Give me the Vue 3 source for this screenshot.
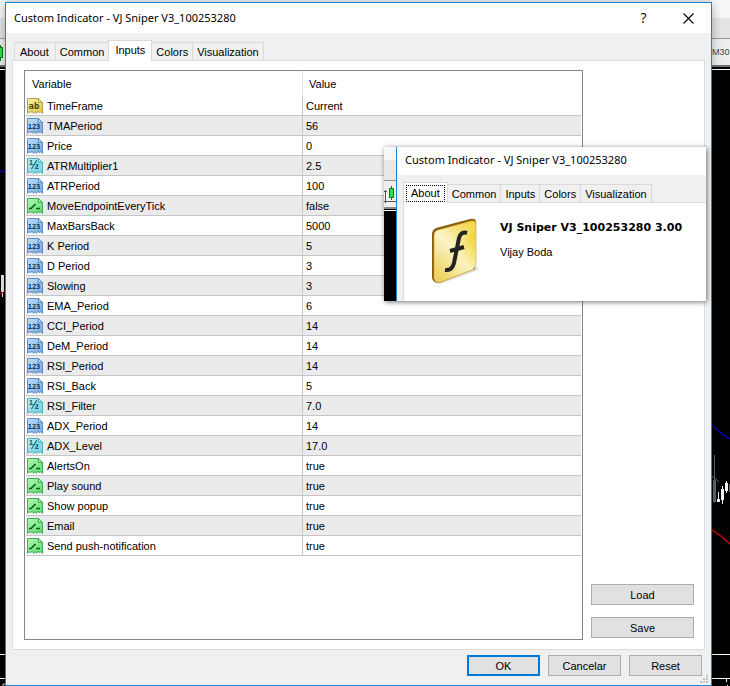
<script setup>
import { ref } from 'vue'

const title = 'Custom Indicator - VJ Sniper V3_100253280'
const tabs = ['About', 'Common', 'Inputs', 'Colors', 'Visualization']
const activeTab = ref('Inputs')
const popupTab = ref('About')

const kinds = {
  text: { light: '#fbf3a6', dark: '#d6c34c', edge: '#b09c3c', ink: '#4d4408', label: 'ab', size: 9 },
  int: { light: '#bfe0fc', dark: '#6ea9e2', edge: '#5288c0', ink: '#0d2f5e', label: '123', size: 7 },
  real: { light: '#b8f0f6', dark: '#70d0e0', edge: '#4aa8ba', ink: '#0f5f74', label: '½', size: 12 },
  bool: { light: '#b4f8b8', dark: '#58d96a', edge: '#38a54c', ink: '#0b5a1c', label: '', size: 7 },
}

const rows = [
  ['text', 'TimeFrame', 'Current'],
  ['int', 'TMAPeriod', '56'],
  ['int', 'Price', '0'],
  ['real', 'ATRMultiplier1', '2.5'],
  ['int', 'ATRPeriod', '100'],
  ['bool', 'MoveEndpointEveryTick', 'false'],
  ['int', 'MaxBarsBack', '5000'],
  ['int', 'K Period', '5'],
  ['int', 'D Period', '3'],
  ['int', 'Slowing', '3'],
  ['int', 'EMA_Period', '6'],
  ['int', 'CCI_Period', '14'],
  ['int', 'DeM_Period', '14'],
  ['int', 'RSI_Period', '14'],
  ['int', 'RSI_Back', '5'],
  ['real', 'RSI_Filter', '7.0'],
  ['int', 'ADX_Period', '14'],
  ['real', 'ADX_Level', '17.0'],
  ['bool', 'AlertsOn', 'true'],
  ['bool', 'Play sound', 'true'],
  ['bool', 'Show popup', 'true'],
  ['bool', 'Email', 'true'],
  ['bool', 'Send push-notification', 'true'],
]
</script>

<template>
  <div class="desktop">
    <svg width="0" height="0" class="defs" aria-hidden="true">
      <defs>
        <linearGradient v-for="(k, name) in kinds" :id="'g-' + name" :key="name" x1="0" y1="0" x2="1" y2="1">
          <stop offset="0" :stop-color="k.light" />
          <stop offset="1" :stop-color="k.dark" />
        </linearGradient>
        <linearGradient id="gold" x1="1" y1="0" x2="0.2" y2="1">
          <stop offset="0" stop-color="#f0cf22" />
          <stop offset="0.25" stop-color="#f2da50" />
          <stop offset="0.55" stop-color="#fbf2c0" />
          <stop offset="1" stop-color="#ecd25e" />
        </linearGradient>
      </defs>
    </svg>

    <div class="chart">
      <div class="chart-caption"></div>
      <div class="chart-menu"></div>
      <div class="chart-tools">
        <svg width="5" height="28" viewBox="0 0 5 28">
          <path d="M0 7h1v2h2v11h-2v3h-1z" fill="#0b7a1c" />
          <path d="M0 10h2v9h-2z" fill="#2fe04a" />
        </svg>
      </div>
      <svg class="plot" width="5" height="617" viewBox="0 0 5 617">
        <path d="M0 0.5H5M0 585.5H5M0 609.5H5" stroke="#fff" />
        <path d="M0 102.5h3l2-1" stroke="#0000e0" fill="none" />
        <path d="M1 206h3v17h-3z" fill="#eee" />
        <path d="M2.5 223v5" stroke="#eee" />
        <path d="M0 224.5l5-2" stroke="#e00000" />
        <path d="M3 617v-2h2" stroke="#ddd" fill="none" />
      </svg>
    </div>

    <main class="dialog">
      <header class="titlebar">
        <h1>{{ title }}</h1>
        <button class="caption-btn" aria-label="Help">?</button>
        <button class="caption-btn" aria-label="Close">
          <svg width="11" height="11" viewBox="0 0 11 11">
            <path d="M0.5 0.5L10.5 10.5M10.5 0.5L0.5 10.5" stroke="#000" stroke-width="1.1" />
          </svg>
        </button>
      </header>

      <div class="tabs" role="tablist">
        <button
          v-for="t in tabs"
          :key="t"
          role="tab"
          class="tab"
          :class="{ active: t === activeTab }"
          @click="activeTab = t"
        >{{ t }}</button>
      </div>

      <section class="panel">
        <div class="list">
          <table>
            <thead>
              <tr>
                <th class="name-col">Variable</th>
                <th class="value-col">Value</th>
              </tr>
            </thead>
            <tbody>
              <tr v-for="[kind, name, value] in rows" :key="name">
                <td>
                  <div class="name">
                    <svg width="16" height="16" viewBox="0 0 16 16">
                      <path
                        d="M0.5 0.5H11.5L15.5 4.5V15.5L14 13.5L12.5 15L11 13L9.5 15.5L8 13.5L6.5 15.5L5 13L3.5 15L2 13.5L0.5 15.5Z"
                        :fill="`url(#g-${kind})`"
                        :stroke="kinds[kind].edge"
                        stroke-width="0.9"
                      />
                      <path d="M11.5 0.5V4.5H15.5Z" :fill="kinds[kind].light" :stroke="kinds[kind].edge" stroke-width="0.9" />
                      <path
                        v-if="kind === 'bool'"
                        d="M2 10.5H4L8.5 6M9 10.5H13"
                        fill="none"
                        :stroke="kinds[kind].ink"
                        stroke-width="1.6"
                      />
                      <text
                        v-else
                        x="7"
                        y="11"
                        text-anchor="middle"
                        :class="kind === 'real' ? 'fraction' : 'glyph'"
                        :font-size="kinds[kind].size"
                        :fill="kinds[kind].ink"
                      >{{ kinds[kind].label }}</text>
                    </svg>
                    <span>{{ name }}</span>
                  </div>
                </td>
                <td class="value">{{ value }}</td>
              </tr>
            </tbody>
          </table>
        </div>
        <div class="side">
          <button class="btn">Load</button>
          <button class="btn">Save</button>
        </div>
      </section>

      <footer class="footer">
        <button class="btn primary">OK</button>
        <button class="btn">Cancelar</button>
        <button class="btn">Reset</button>
        <svg class="grip" width="8" height="8" viewBox="0 0 8 8">
          <path
            d="M6 0h2v2h-2zM3 3h2v2h-2zM6 3h2v2h-2zM0 6h2v2h-2zM3 6h2v2h-2zM6 6h2v2h-2z"
            fill="#bfbfbf"
          />
        </svg>
      </footer>
    </main>

    <div class="chart">
      <div class="chart-caption"></div>
      <div class="chart-menu"></div>
      <div class="chart-tools"><span>M30</span></div>
      <svg class="plot" width="18" height="617" viewBox="0 0 18 617">
        <path d="M0 0.5H18M0 585.5H18M0 609.5H18" stroke="#fff" />
        <path d="M0 356C6 362 11 367 18 370" stroke="#0000e0" stroke-width="1.2" fill="none" />
        <path d="M0 461C7 465 12 469 18 475" stroke="#e00000" stroke-width="1.2" fill="none" />
        <path d="M2.5 386v48M0 408h2l5 5" stroke="#666" fill="none" />
        <path d="M1 411h3v22h-3zM17 415h1v8h-1z" fill="#666" />
        <path d="M5 430h3v3h-3zM9 420h3v11h-3zM13 414h3v8h-3z" fill="#f4f4f4" />
        <path d="M6.5 423v9M10.5 417v18M14.5 412v12M14.5 610v3M15.5 616v1" stroke="#f4f4f4" />
      </svg>
    </div>

    <aside class="popup">
      <div class="popup-chart">
        <div class="popup-caption"></div>
        <div class="popup-menu"></div>
        <div class="popup-tools">
          <svg width="12" height="27" viewBox="0 0 12 27">
            <path d="M1.5 9v13M0 20.5h12M0 10.5h3" stroke="#555" fill="none" />
            <path d="M7.5 5v14" stroke="#087018" />
            <path d="M5.5 7.5h4v9h-4z" fill="#2fe04a" stroke="#087018" />
          </svg>
        </div>
      </div>
      <div class="popup-main">
        <header class="popup-title">{{ title }}</header>
        <div class="tabs popup-tabs" role="tablist">
          <button
            v-for="t in tabs"
            :key="t"
            role="tab"
            class="tab"
            :class="{ active: t === popupTab, focus: t === popupTab }"
            @click="popupTab = t"
          ><span>{{ t }}</span></button>
        </div>
        <section class="about">
          <svg width="50" height="68" viewBox="0 0 50 68">
            <path d="M4 64L10 67L49 53L45 48Z" fill="#000" opacity="0.12" />
            <path d="M2 17Q2 13 6 11L40 2Q45 1 46 4L45 52L9 66Q3 66 2 61Z" fill="#8a5c10" />
            <path
              d="M4 18Q4 14 8 13L41 4Q46 3 46 7V46Q46 51 42 53L11 65Q5 67 4 61Z"
              fill="url(#gold)"
              stroke="#cfa53a"
              stroke-width="0.6"
            />
            <path d="M5 18Q5 15 9 14L41 5Q45 4 45 7V12Q35 30 5 38Z" fill="#fff" opacity="0.15" />
            <path
              d="M37 16Q31 14 29 21L24 46Q22 54 15 53M20 34L34 30"
              fill="none"
              stroke="#222"
              stroke-width="4"
            />
          </svg>
          <div class="about-text">
            <h2>VJ Sniper V3_100253280 3.00</h2>
            <p>Vijay Boda</p>
          </div>
        </section>
      </div>
    </aside>
  </div>
</template>

<style>
body {
  margin: 0;
  background: #000;
}
</style>

<style scoped>
.desktop {
  position: relative;
  display: grid;
  grid-template-columns: 5px minmax(0, 1fr) 18px;
  min-height: 100vh;
  background: linear-gradient(#eee 2px, #000 2px);
  color: #000;
  font-family: "Liberation Sans", Arial, sans-serif;
  font-size: 11px;
  line-height: 14px;
  overflow: hidden;
}

.desktop * {
  box-sizing: border-box;
}

.defs {
  position: absolute;
}

svg {
  display: block;
  flex: none;
}

button {
  font: inherit;
  color: inherit;
  margin: 0;
}

/* chart window behind the dialog */
.chart {
  overflow: hidden;
}

.chart-caption {
  height: 18px;
  background: #f7f7f7;
}

.chart-menu {
  height: 20px;
  background: #e4e4e4;
}

.chart-tools {
  display: flex;
  align-items: center;
  height: 29px;
  border-top: 1px solid #999;
  border-bottom: 2px solid #707070;
  background: #eee;
  color: #444;
  font-size: 9px;
}

.plot {
  margin-top: 2px;
  overflow: hidden;
}

/* dialog */
.dialog {
  position: relative;
  display: flex;
  flex-direction: column;
  margin-top: 2px;
  border: 1px solid #1883d7;
  background: #f0f0f0;
  box-shadow: 0 2px 10px rgba(0, 0, 0, 0.3);
}

.titlebar {
  display: flex;
  align-items: center;
  height: 30px;
  padding-left: 8px;
  background: #fff;
}

h1 {
  flex: 1;
  margin: 0;
  font: 400 11px/16px "Noto Sans", "Segoe UI", sans-serif;
}

.caption-btn {
  display: flex;
  align-items: center;
  justify-content: center;
  width: 45px;
  height: 30px;
  padding: 0;
  border: 0;
  background: none;
  font: 400 14px/16px "Open Sans", "Segoe UI", sans-serif;
}

.tabs {
  display: flex;
  align-items: flex-end;
  height: 27px;
  padding-left: 8px;
}

.tab {
  height: 18px;
  padding: 1px 4px 0;
  border: 1px solid #d9d9d9;
  border-width: 1px 0 0 1px;
  background: #f0f0f0;
}

.tab:first-child {
  padding: 1px 6px 0 5px;
}

.tab:last-child {
  border-right-width: 1px;
}

.tab.active {
  position: relative;
  height: 21px;
  margin-bottom: -1px;
  padding: 0 6px 2px;
  border-right-width: 1px;
  background: #fff;
}

.tab.active + .tab {
  border-left-width: 0;
}

.panel {
  display: flex;
  flex: 1;
  gap: 8px;
  margin: 0 6px;
  padding: 9px 10px 9px 11px;
  border: 1px solid #dcdcdc;
  background: #fff;
}

.list {
  flex: 1;
  min-height: 570px;
  padding: 0 1px;
  border: 1px solid #828790;
}

table {
  width: 100%;
  border-collapse: separate;
  border-spacing: 0;
  table-layout: fixed;
}

th {
  height: 25px;
  padding: 0 6px;
  font-weight: 400;
  text-align: left;
}

.name-col {
  width: 276px;
}

.value-col {
  border-left: 1px solid #e5e5e5;
}

td {
  height: 20px;
  padding: 0;
  border-bottom: 1px solid #c5c5c5;
}

.value {
  padding-left: 3px;
  border-left: 1px solid #c5c5c5;
}

tbody tr:nth-child(even) {
  background: #ebebeb;
}

.name {
  display: flex;
  align-items: center;
  gap: 4px;
  padding-left: 1px;
}

.glyph {
  font-family: "DejaVu Sans Mono", monospace;
  font-weight: 700;
}

.fraction {
  font-family: "Liberation Sans", Arial, sans-serif;
  font-weight: 700;
}

.side {
  display: flex;
  flex-direction: column;
  justify-content: flex-end;
  gap: 12px;
  width: 103px;
  padding-bottom: 2px;
}

.btn {
  height: 21px;
  padding: 0;
  border: 1px solid #adadad;
  background: #e1e1e1;
}

.btn.primary {
  border: 2px solid #0078d7;
}

.footer {
  position: relative;
  display: flex;
  justify-content: flex-end;
  gap: 8px;
  padding: 5px 9px 9px;
}

.footer .btn {
  width: 73px;
}

.grip {
  position: absolute;
  right: 3px;
  bottom: 2px;
}

/* floating preview of the About tab */
.popup {
  position: absolute;
  top: 147px;
  right: 24px;
  display: flex;
  width: 322px;
  height: 154px;
  background: #f0f0f0;
  box-shadow: 1px 1px 5px rgba(0, 0, 0, 0.55);
}

.popup-chart {
  width: 12px;
  background: #000;
}

.popup-caption {
  height: 13px;
  background: #f7f7f7;
}

.popup-menu {
  height: 20px;
  background: #e8e8e8;
}

.popup-tools {
  height: 29px;
  border-top: 1px solid #999;
  border-bottom: 2px solid #888;
  background: #eee;
}

.popup-tools::after {
  content: "";
  display: block;
  height: 1px;
  margin-top: 2px;
  background: #fff;
}

.popup-main {
  display: flex;
  flex: 1;
  flex-direction: column;
  border-left: 1px solid #1883d7;
}

.popup-title {
  height: 28px;
  padding: 5px 8px;
  background: #fff;
  font: 400 11px/16px "Noto Sans", "Segoe UI", sans-serif;
}

.popup-tabs {
  padding-left: 6px;
}

.tab.active.focus {
  padding: 1px 2px;
}

.focus span {
  display: block;
  height: 17px;
  padding: 0 4px;
  border: 1px dotted #000;
}

.about {
  display: flex;
  flex: 1;
  gap: 20px;
  margin-left: 6px;
  padding: 14px 0 0 26px;
  border: 1px solid #dcdcdc;
  border-width: 1px 0 0 1px;
  background: #fff;
}

.about-text {
  padding-top: 3px;
}

h2 {
  margin: 0 0 9px;
  font: 700 11px/16px "DejaVu Sans", Verdana, sans-serif;
  white-space: nowrap;
}

p {
  margin: 0;
}
</style>
